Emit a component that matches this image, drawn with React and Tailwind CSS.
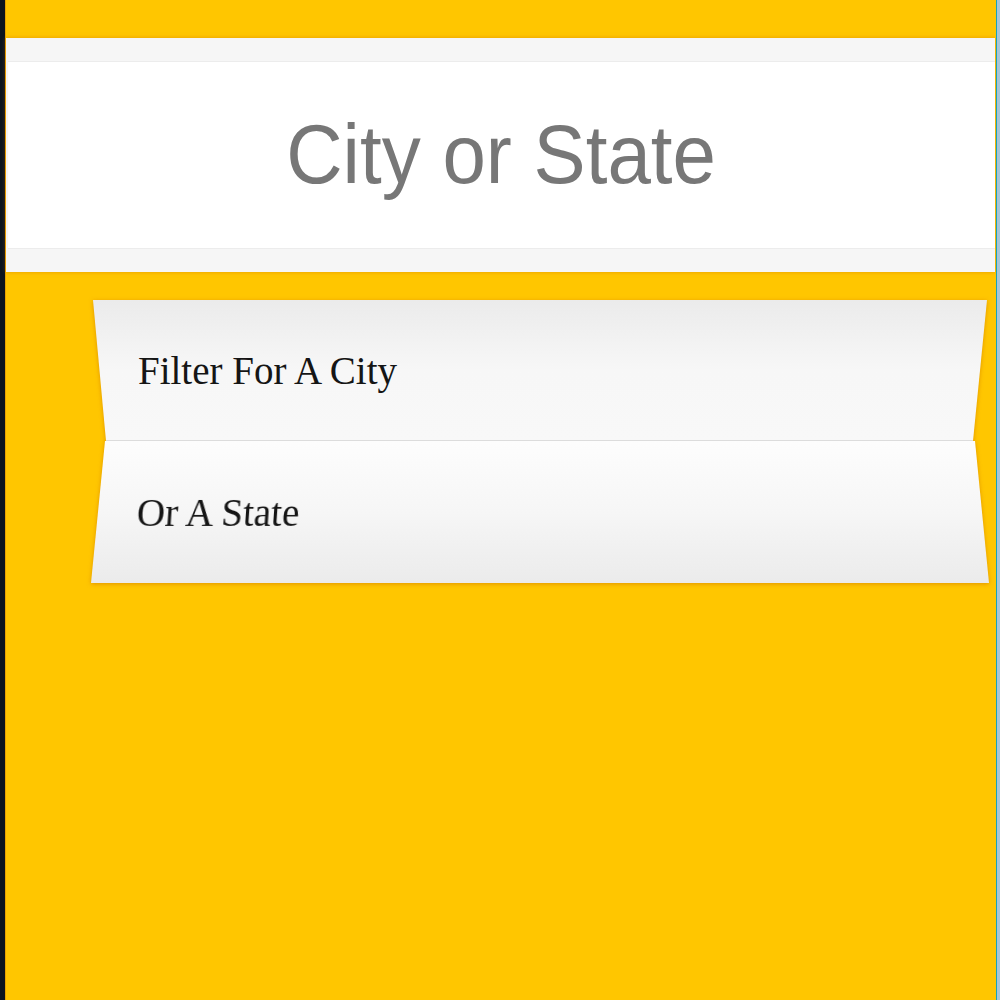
export default function App() {
  return (
    <div className="flex min-h-screen w-full bg-[#0c141e]">
      <div className="w-[5px] shrink-0 bg-[#0c141e]" />
      <main className="flex-1 min-h-screen bg-[#ffc600] border-l border-[#e9a200] pt-[38px] pb-10">
        <header className="bg-[#f6f6f6] py-[23px] shadow-[0_0_4px_rgba(210,120,0,0.55)] mr-[1px]">
          <div className="bg-white border-y border-[#ececec] h-[188px] flex items-center justify-center ml-[2px]">
            <h1
              className="text-[#777777] text-[84px] leading-none scale-x-[0.93] pb-[2px]"
              style={{ fontFamily: '"Liberation Sans", Arial, sans-serif' }}
            >
              City or State
            </h1>
          </div>
        </header>

        <div className="ml-[85px] mr-[7px] mt-[28px] drop-shadow-[0_1px_2px_rgba(200,110,0,0.55)]">
          <div className="h-[141px] flex items-center pl-[47px] bg-linear-to-b from-[#ebebeb] via-[#f7f7f7] to-[#f8f8f8] border-b border-[#dcdcdc] [clip-path:polygon(2px_0,896px_0,882px_100%,15px_100%)]">
            <span
              className="text-[#151515] text-[39px] leading-none"
              style={{ fontFamily: '"Liberation Serif", "Times New Roman", serif' }}
            >
              Filter For A City
            </span>
          </div>
          <div className="h-[142px] flex items-center pl-[46px] bg-linear-to-b from-[#fdfdfd] via-[#f6f6f6] to-[#ebebeb] [clip-path:polygon(14px_0,884px_0,898px_100%,0_100%)]">
            <span
              className="text-[#151515] text-[39px] leading-none -skew-x-[4deg]"
              style={{ fontFamily: '"Liberation Serif", "Times New Roman", serif' }}
            >
              Or A State
            </span>
          </div>
        </div>
      </main>
      <div className="w-[1px] shrink-0 bg-[#17a2b8]" />
      <div className="w-[3px] shrink-0 bg-[#a9c6d6]" />
    </div>
  );
}
